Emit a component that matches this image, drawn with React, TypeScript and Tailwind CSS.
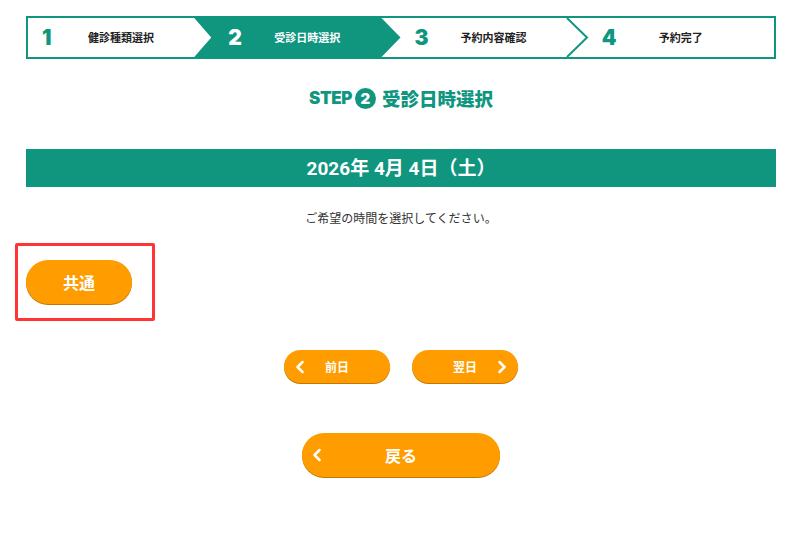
import React from "react";
import { ChevronLeft, ChevronRight } from "lucide-react";

const JP = "font-['Noto_Sans_CJK_JP','Noto_Sans',sans-serif]";

function StepNum({ n, white }: { n: string; white?: boolean }) {
  return (
    <span
      className={`w-[26px] font-['Inter',sans-serif] font-black text-[21px] leading-none ${
        white ? "text-white" : "text-[#10967f]"
      }`}
    >
      {n}
    </span>
  );
}

function StepLabel({ t, white }: { t: string; white?: boolean }) {
  return (
    <span
      className={`w-[106px] text-center ${JP} font-bold text-[11px] leading-none ${
        white ? "text-white" : "text-[#222]"
      }`}
    >
      {t}
    </span>
  );
}

export default function App() {
  return (
    <div className="relative w-[802px] min-h-[538px] bg-white pt-4">
      {/* Stepper */}
      <div className="mx-auto w-[750px] h-[43px] border-2 border-[#10967f] flex bg-white">
        <div className="relative flex-1 flex items-center pl-[14px]">
          <StepNum n="1" />
          <StepLabel t="健診種類選択" />
        </div>
        <div className="relative flex-1 flex items-center pl-[14px]">
          <div className="absolute top-0 bottom-0 -left-[20px] right-0 bg-[#10967f] [clip-path:polygon(0_0,calc(100%_-_19px)_0,100%_50%,calc(100%_-_19px)_100%,0_100%,17px_50%)]" />
          <div className="relative flex items-center">
            <StepNum n="2" white />
            <StepLabel t="受診日時選択" white />
          </div>
        </div>
        <div className="relative flex-1 flex items-center pl-[14px]">
          <StepNum n="3" />
          <StepLabel t="予約内容確認" />
        </div>
        <div className="relative flex-1 flex items-center pl-[15px]">
          <svg
            className="absolute -left-[21px] top-0 h-full w-[23px]"
            viewBox="0 0 23 39"
            preserveAspectRatio="none"
          >
            <polyline
              points="1,0 21,19.5 1,39"
              fill="none"
              stroke="#10967f"
              strokeWidth="2"
            />
          </svg>
          <StepNum n="4" />
          <StepLabel t="予約完了" />
        </div>
      </div>

      {/* Heading */}
      <div className="mt-[27px] h-[24px] flex items-center justify-center text-[#10967f]">
        <span className="font-['Inter',sans-serif] font-black text-[17px] leading-none tracking-[-0.4px]">
          STEP
        </span>
        <span className="ml-[3px] w-[21px] h-[21px] rounded-full bg-[#10967f] text-white flex items-center justify-center font-['Inter',sans-serif] font-black text-[15px] leading-none">
          2
        </span>
        <span className={`ml-[6px] ${JP} font-black text-[18.5px] leading-none`}>
          受診日時選択
        </span>
      </div>

      {/* Date bar */}
      <div className="mx-auto mt-[39px] w-[750px] h-[38px] bg-[#10967f] flex items-center justify-center">
        <span className="font-['Roboto','Noto_Sans_CJK_JP',sans-serif] font-bold text-[19px] text-white leading-none">
          2026年 4月 4日（土）
        </span>
      </div>

      {/* Instruction */}
      <p className={`mt-[22px] text-center ${JP} text-[12px] leading-[18px] text-[#333]`}>
        ご希望の時間を選択してください。
      </p>

      {/* Time button */}
      <div className="mt-[33px] pl-[26px]">
        <button
          className={`w-[106px] h-[44px] rounded-full bg-[#fe9c00] shadow-[0_1px_0_#c47800] text-white ${JP} font-bold text-[16px] leading-none`}
        >
          共通
        </button>
      </div>

      {/* Prev / Next */}
      <div className="mt-[46px] flex justify-center gap-[22px]">
        <button
          className={`relative w-[106px] h-[33px] rounded-full bg-[#fe9c00] shadow-[0_1px_0_#c47800] text-white ${JP} font-bold text-[12px] leading-none`}
        >
          <ChevronLeft
            size={20}
            strokeWidth={3}
            className="absolute left-[6px] top-1/2 -translate-y-1/2"
          />
          前日
        </button>
        <button
          className={`relative w-[106px] h-[33px] rounded-full bg-[#fe9c00] shadow-[0_1px_0_#c47800] text-white ${JP} font-bold text-[12px] leading-none`}
        >
          翌日
          <ChevronRight
            size={20}
            strokeWidth={3}
            className="absolute right-[6px] top-1/2 -translate-y-1/2"
          />
        </button>
      </div>

      {/* Back */}
      <div className="mt-[50px] flex justify-center">
        <button
          className={`relative w-[198px] h-[44px] rounded-full bg-[#fe9c00] shadow-[0_1px_0_#c47800] text-white ${JP} font-bold text-[16px] leading-none`}
        >
          <ChevronLeft
            size={20}
            strokeWidth={3}
            className="absolute left-[5px] top-1/2 -translate-y-1/2"
          />
          戻る
        </button>
      </div>

      {/* Highlight annotation */}
      <div className="absolute left-[15px] top-[243px] w-[140px] h-[78px] border-[3px] border-[#ff3434] rounded-[2px] pointer-events-none" />
    </div>
  );
}
